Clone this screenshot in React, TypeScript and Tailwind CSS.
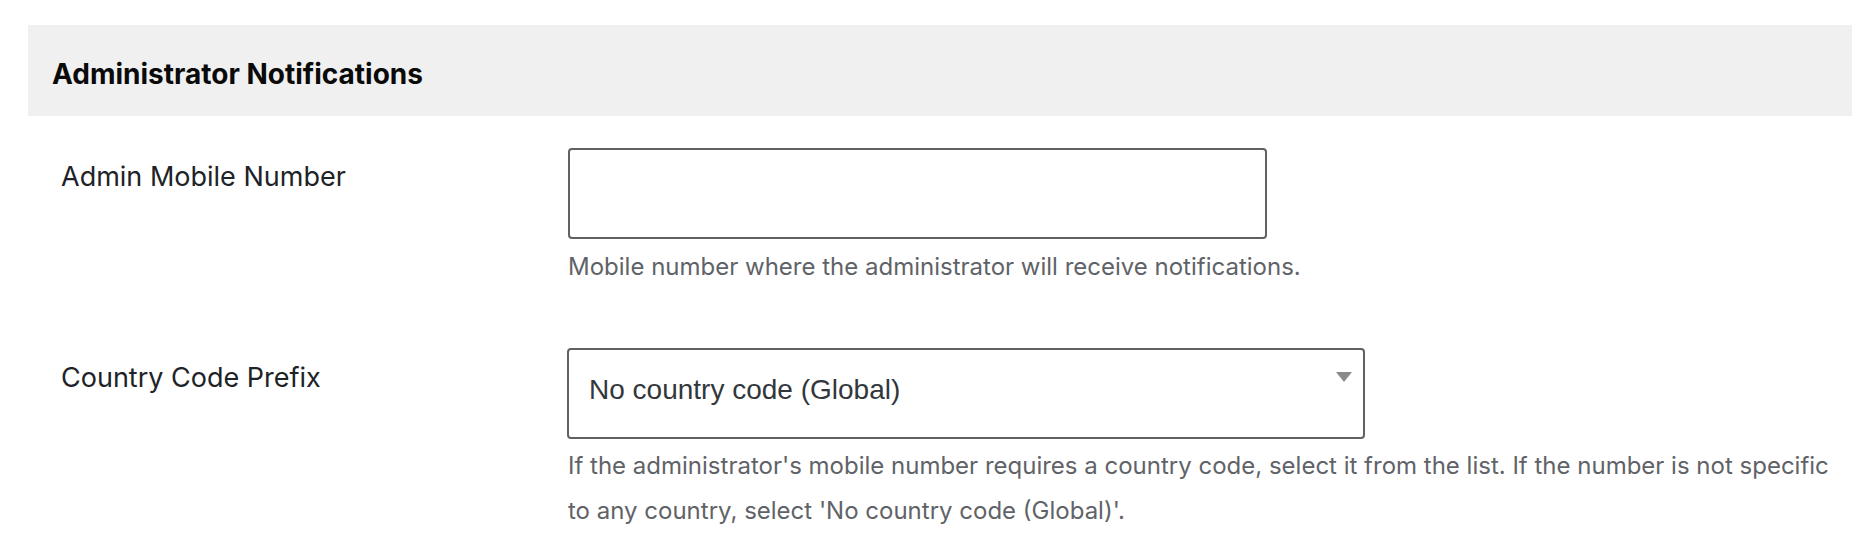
import React from "react";

export default function App() {
  return (
    <div
      className="min-h-screen bg-white pt-[25px] pl-[28px]"
      style={{ fontFamily: "Inter, 'Noto Sans', sans-serif" }}
    >
      <div className="w-[1824px]">
        <div className="flex h-[91px] items-center bg-[#f0f0f0] pl-[24px]">
          <h2 className="pt-[6px] text-[28px] font-bold leading-none text-[#0a0a0a]">
            Administrator Notifications
          </h2>
        </div>

        <div className="mt-[32px] grid grid-cols-[540px_1fr] pr-[20px]">
          <label
            htmlFor="admin-mobile"
            className="mt-[11px] pl-[33px] text-[27px] leading-[36px] text-[#1d2327]"
          >
            Admin Mobile Number
          </label>
          <div>
            <input
              id="admin-mobile"
              type="text"
              className="block h-[91px] w-[699px] rounded-[4px] border-2 border-[#616161] bg-white px-[16px] text-[27px] outline-none"
            />
            <p className="mt-[5px] text-[24px] leading-[45px] text-[#5f6368]">
              Mobile number where the administrator will receive notifications.
            </p>
          </div>
        </div>

        <div className="mt-[59px] grid grid-cols-[540px_1fr] pr-[20px]">
          <label className="mt-[12px] pl-[33px] text-[27px] leading-[36px] text-[#1d2327]">
            Country Code Prefix
          </label>
          <div>
            <div className="-ml-px flex h-[91px] w-[798px] items-start justify-between rounded-[4px] border-2 border-[#616161] bg-white pl-[20px] pr-[11px]">
              <span
                className="mt-[20px] text-[28px] leading-[40px] text-[#32373c]"
                style={{ fontFamily: "'Liberation Sans', Arial, sans-serif" }}
              >
                No country code (Global)
              </span>
              <svg
                className="mt-[22px]"
                width="16"
                height="10"
                viewBox="0 0 16 10"
                aria-hidden="true"
              >
                <path d="M0 0 L16 0 L8 10 Z" fill="#8a8a8a" />
              </svg>
            </div>
            <p className="mt-[4px] text-[24px] leading-[45px] text-[#5f6368]">
              If the administrator's mobile number requires a country code, select it
              from the list. If the number is not specific to any country, select 'No
              country code (Global)'.
            </p>
          </div>
        </div>
      </div>
    </div>
  );
}
